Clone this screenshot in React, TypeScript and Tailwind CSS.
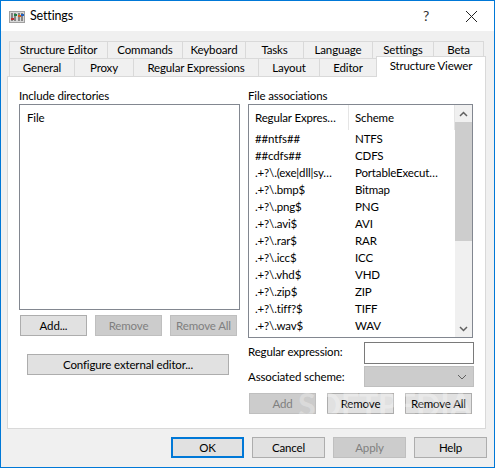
import React from "react";

function Btn({ w, label, disabled, def, cls }: { w: string; label: string; disabled?: boolean; def?: boolean; cls?: string }) {
  return (
    <div
      className={`${w} h-[21px] flex items-center justify-center border ${
        def
          ? "border-[2px] border-[#0078d7] bg-[#e1e1e1] text-[#000]"
          : disabled
          ? "border-[#bfbfbf] bg-[#cccccc] text-[#7f7f7f]"
          : "border-[#adadad] bg-[#e1e1e1] text-[#000]"
      } ${cls ?? ""}`}
    >
      {label}
    </div>
  );
}

function Tab({ w, label }: { w: string; label: string }) {
  return (
    <div className={`${w} h-full flex items-center justify-center border-l border-t border-[#d9d9d9] bg-[#f0f0f0] last:border-r`}>
      {label}
    </div>
  );
}

const rows: [string, string][] = [
  ["##ntfs##", "NTFS"],
  ["##cdfs##", "CDFS"],
  [".+?\\.(exe|dll|sy…", "PortableExecut…"],
  [".+?\\.bmp$", "Bitmap"],
  [".+?\\.png$", "PNG"],
  [".+?\\.avi$", "AVI"],
  [".+?\\.rar$", "RAR"],
  [".+?\\.icc$", "ICC"],
  [".+?\\.vhd$", "VHD"],
  [".+?\\.zip$", "ZIP"],
  [".+?\\.tiff?$", "TIFF"],
  [".+?\\.wav$", "WAV"],
];

export default function App() {
  return (
    <div className="relative w-[495px] h-[468px] overflow-hidden border border-[#0078d7] bg-[#f0f0f0] font-['Lato',sans-serif] text-[11.5px] tracking-[-0.15px] text-[#000] leading-none flex flex-col">
      {/* Title bar */}
      <div className="h-[30px] bg-white flex items-center shrink-0 pl-[8px]">
        <svg width="16" height="12" viewBox="0 0 16 12" className="shrink-0 mt-[1px]">
          <rect x="0" y="0" width="16" height="12" fill="#a0a0a0" />
          <rect x="1" y="1" width="14" height="10" fill="#d8d8d8" />
          <path d="M3 2v8M6 2v8M10 2v8M13 2v8" stroke="#333" strokeWidth="1" />
          <rect x="2" y="7" width="3" height="2" fill="#c03030" />
          <rect x="5" y="3" width="3" height="2" fill="#208040" />
          <rect x="9" y="4" width="3" height="2" fill="#d06020" />
          <rect x="12" y="3" width="3" height="2" fill="#2060c0" />
        </svg>
        <span className="ml-[5px] text-[12.5px] text-[#000]">Settings</span>
        <span className="ml-auto text-[14px] text-[#333] mr-[37px]">?</span>
        <svg width="11" height="11" viewBox="0 0 11 11" className="mr-[17px]">
          <path d="M0 0L11 11M11 0L0 11" stroke="#222" strokeWidth="1" fill="none" />
        </svg>
      </div>

      {/* Tabs */}
      <div className="relative mt-[10px] pl-[8px] h-[17px] flex shrink-0">
        <Tab w="w-[98px]" label="Structure Editor" />
        <Tab w="w-[75px]" label="Commands" />
        <Tab w="w-[63px]" label="Keyboard" />
        <Tab w="w-[58px]" label="Tasks" />
        <Tab w="w-[69px]" label="Language" />
        <Tab w="w-[61px]" label="Settings" />
        <Tab w="w-[51px]" label="Beta" />
      </div>
      <div className="relative pl-[8px] h-[18px] flex shrink-0">
        <Tab w="w-[65px]" label="General" />
        <Tab w="w-[59px]" label="Proxy" />
        <Tab w="w-[125px]" label="Regular Expressions" />
        <Tab w="w-[61px]" label="Layout" />
        <Tab w="w-[57px]" label="Editor" />
        <div className="absolute left-[375px] top-[-2px] z-10 w-[110px] h-[21px] bg-white border border-b-0 border-[#d9d9d9] flex items-center justify-center pb-[3px]">
          Structure Viewer
        </div>
      </div>

      {/* Page */}
      <div className="ml-[6px] w-[479px] h-[353px] bg-white border border-[#d9d9d9] flex shrink-0">
        {/* Left */}
        <div className="w-[240px] pl-[11px] shrink-0 flex flex-col">
          <div className="h-[27px] pt-[13px]">Include directories</div>
          <div className="w-[221px] h-[206px] border border-[#828790] pl-[7px] pt-[7px]">File</div>
          <div className="mt-[5px] ml-[1px] flex gap-[8px]">
            <Btn w="w-[67px]" label="Add..." />
            <Btn w="w-[67px]" label="Remove" disabled />
            <Btn w="w-[67px]" label="Remove All" disabled />
          </div>
          <Btn w="w-[202px]" label="Configure external editor..." cls="mt-[18px] ml-[8px]" />
        </div>

        {/* Right */}
        <div className="flex-1 flex flex-col">
          <div className="h-[27px] pt-[13px]">File associations</div>
          <div className="w-[225px] h-[234px] border border-[#828790] flex">
            <div className="flex-1 min-w-0">
              <div className="h-[25px] flex items-center">
                <div className="w-[100px] h-full pl-[6px] flex items-center border-r border-[#e5e5e5]">Regular Expres…</div>
                <div className="flex-1 h-full pl-[6px] flex items-center border-r border-[#e5e5e5]">Scheme</div>
              </div>
              {rows.map(([a, b]) => (
                <div key={a} className="h-[17px] flex items-center">
                  <div className="w-[100px] pl-[6px] whitespace-nowrap">{a}</div>
                  <div className="pl-[6px] whitespace-nowrap">{b}</div>
                </div>
              ))}
            </div>
            <div className="w-[17px] bg-[#f0f0f0] flex flex-col shrink-0">
              <div className="h-[17px] flex items-center justify-center">
                <svg width="9" height="6" viewBox="0 0 9 6"><path d="M1 5L4.5 1.5L8 5" stroke="#606060" strokeWidth="1.5" fill="none" /></svg>
              </div>
              <div className="h-[119px] bg-[#cdcdcd]" />
              <div className="flex-1" />
              <div className="h-[17px] flex items-center justify-center">
                <svg width="9" height="6" viewBox="0 0 9 6"><path d="M1 1L4.5 4.5L8 1" stroke="#606060" strokeWidth="1.5" fill="none" /></svg>
              </div>
            </div>
          </div>
          <div className="mt-[3px] flex items-center h-[23px]">
            <span className="w-[116px] pb-[2px]">Regular expression:</span>
            <div className="w-[110px] h-[22px] border border-[#7a7a7a] bg-white" />
          </div>
          <div className="mt-[2px] flex items-center h-[21px]">
            <span className="w-[116px] pt-[1px]">Associated scheme:</span>
            <div className="w-[110px] h-[21px] border border-[#bfbfbf] bg-[#cccccc] flex items-center justify-end pr-[6px]">
              <svg width="10" height="6" viewBox="0 0 10 6"><path d="M1 1L5 5L9 1" stroke="#606060" strokeWidth="1" fill="none" /></svg>
            </div>
          </div>
          <div className="mt-[6px] ml-[1px] flex gap-[11px]">
            <Btn w="w-[67px]" label="Add" disabled />
            <Btn w="w-[67px]" label="Remove" />
            <Btn w="w-[67px]" label="Remove All" />
          </div>
        </div>
      </div>

      {/* Footer */}
      <div className="mt-[8px] pl-[170px] flex gap-[8px]">
        <Btn w="w-[73px]" label="OK" def />
        <Btn w="w-[73px]" label="Cancel" />
        <Btn w="w-[73px]" label="Apply" disabled />
        <Btn w="w-[73px]" label="Help" />
      </div>

      {/* Watermark */}
      <div className="absolute left-[297px] top-[388px] text-[32px] font-bold text-white/30 pointer-events-none whitespace-nowrap">
        SOFTPEDIA
      </div>
    </div>
  );
}
